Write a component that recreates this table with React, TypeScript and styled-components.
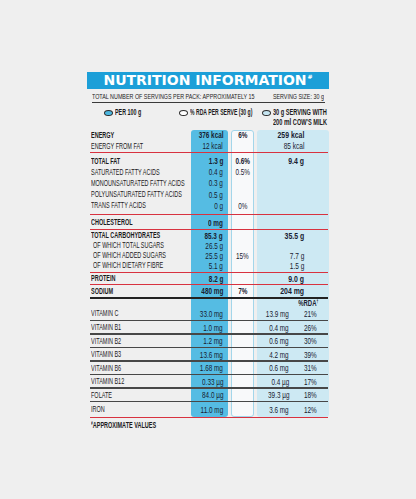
import React from 'react';
import styled, { createGlobalStyle } from 'styled-components';

const Global = createGlobalStyle`
  html, body { margin: 0; padding: 0; background: #efefef; }
  body { font-family: "Liberation Sans", Arial, sans-serif; color: #1c1b1c; }
`;

const Page = styled.div`
  width: 416px;
  height: 499px;
  padding-top: 72px;
  box-sizing: border-box;
  overflow: hidden;
`;

const Panel = styled.div`
  width: 242px;
  margin: 0 auto;
`;

const TitleBar = styled.div`
  height: 17px;
  background: #1c9fd8;
  color: #fff;
  display: flex;
  align-items: center;
  justify-content: center;
  font-family: "DejaVu Sans", sans-serif;
  font-weight: 700;
  font-size: 14px;
  line-height: 17px;
`;

const TitleSup = styled.span`
  font-size: 6px;
  line-height: 6px;
  align-self: flex-start;
  margin-top: 2px;
  margin-left: 1px;
`;

const Cond = styled.span<{ $size?: number; $s?: number; $o?: 'left' | 'right' | 'center'; $bold?: boolean }>`
  display: inline-block;
  white-space: nowrap;
  font-size: ${p => p.$size ?? 8.6}px;
  line-height: 1;
  font-weight: ${p => (p.$bold ? 700 : 400)};
  transform: scaleX(${p => p.$s ?? 0.64});
  transform-origin: ${p => p.$o ?? 'left'} center;
`;

const InfoRow = styled.div`
  margin: 0 4px 0 5px;
  padding-top: 3px;
  height: 10px;
  border-bottom: 1px solid #3a3a3a;
  display: grid;
  grid-template-columns: 1fr 1fr;
  align-items: center;
`;

const InfoLeft = styled.div`
  display: flex;
  justify-content: flex-start;
  min-width: 0;
`;

const InfoRight = styled.div`
  display: flex;
  justify-content: flex-end;
  min-width: 0;
  padding-right: 1px;
`;

const Legend = styled.div`
  height: 26.5px;
  box-sizing: border-box;
  padding: 4.7px 0 0 17px;
  display: grid;
  grid-template-columns: 75px 83px 1fr;
  align-items: start;
`;

const LegendItem = styled.div`
  display: flex;
  align-items: flex-start;
  gap: 2px;
`;

const LegendText = styled.div`
  display: flex;
  flex-direction: column;
  & > span { height: 9px; line-height: 9px; }
`;

const Oval = styled.span<{ $fill: string }>`
  width: 7px;
  height: 4px;
  margin-top: 2.2px;
  border: 1px solid #2b2b2b;
  border-radius: 50%;
  background: ${p => p.$fill};
  flex: none;
`;

const Big = styled.span`
  font-size: 9.6px;
  line-height: 9px;
`;

const Table = styled.div<{ $rows: string }>`
  display: grid;
  grid-template-columns: 101px 37px 23px 72px;
  column-gap: 3px;
  grid-template-rows: ${p => p.$rows};
`;

const Col1Bg = styled.div`
  grid-column: 2;
  grid-row: 1 / -1;
  background: #55bce3;
  border-radius: 3px;
  z-index: 0;
`;

const Col2Bg = styled.div`
  grid-column: 3;
  grid-row: 1 / -1;
  background: #f8f9fa;
  border: 1.5px solid #a3d6ea;
  border-radius: 3px;
  z-index: 0;
`;

const Col3Bg = styled.div`
  grid-column: 4;
  grid-row: 1 / -1;
  background: #cde9f3;
  border-radius: 3px;
  z-index: 0;
`;

const Rule = styled.div<{ $r: number; $at: number; $t: number; $c: string }>`
  grid-row: ${p => p.$r};
  grid-column: 1 / -1;
  align-self: start;
  margin: ${p => p.$at}px 1px 0 3px;
  height: ${p => p.$t}px;
  background: ${p => p.$c};
  z-index: 1;
`;

const CellBase = styled.div<{ $r: number }>`
  grid-row: ${p => p.$r};
  display: flex;
  align-items: center;
  min-width: 0;
  z-index: 2;
  color: #182030;
`;

const LabelCell = styled(CellBase)<{ $indent?: boolean }>`
  grid-column: 1;
  justify-content: flex-start;
  padding-left: ${p => (p.$indent ? 5.5 : 4)}px;
  color: #1c1b1c;
`;

const PerHundredCell = styled(CellBase)`
  grid-column: 2;
  justify-content: flex-end;
  padding-right: 5px;
`;

const RdaCell = styled(CellBase)`
  grid-column: 3;
  justify-content: center;
`;

const ServeCell = styled(CellBase)`
  grid-column: 4;
  justify-content: flex-end;
  padding-right: 25px;
`;

const VitServeCell = styled(CellBase)`
  grid-column: 4;
  display: grid;
  grid-template-columns: 32px 28px;
  justify-items: end;
  align-items: center;
`;

const RdaHead = styled(CellBase)`
  grid-column: 4;
  justify-content: flex-end;
  padding-right: 11px;
`;

const SupMark = styled.sup`
  font-size: 5px;
  vertical-align: top;
  line-height: 1;
`;

const BottomRule = styled.div`
  margin: 0.4px 1px 0 3px;
  height: 1.3px;
  background: #d8323f;
`;

const Footnote = styled.div`
  margin-top: 2.8px;
  padding-left: 4px;
  height: 9px;
  display: flex;
  align-items: center;
`;

type RowE = {
  k: 'row';
  h: number;
  label: string;
  v1?: string;
  v2?: string;
  v3?: string;
  bold?: boolean;
  indent?: boolean;
};
type VitE = { k: 'vit'; h: number; label: string; v1: string; amt: string; pct: string };
type LineE = { k: 'line'; h: number; at: number; t: number; c: string };
type HeadE = { k: 'head'; h: number };
type Entry = RowE | VitE | LineE | HeadE;

const RED = '#d8323f';
const DARK = '#222222';
const GRAY = '#474747';

const row = (h: number, label: string, v1?: string, v2?: string, v3?: string, o: { bold?: boolean; indent?: boolean } = {}): RowE => ({
  k: 'row', h, label, v1, v2, v3, ...o,
});
const vit = (h: number, label: string, v1: string, amt: string, pct: string): VitE => ({ k: 'vit', h, label, v1, amt, pct });
const line = (h: number, at: number, t: number, c: string): LineE => ({ k: 'line', h, at, t, c });
const gl = (): LineE => line(1.5, 0, 1.5, GRAY);

const entries: Entry[] = [
  row(11, 'ENERGY', '376 kcal', '6%', '259 kcal', { bold: true }),
  row(11, 'ENERGY FROM FAT', '12 kcal', '', '85 kcal'),
  line(3.95, 0.15, 1.3, RED),
  row(11.1, 'TOTAL FAT', '1.3 g', '0.6%', '9.4 g', { bold: true }),
  row(11.1, 'SATURATED FATTY ACIDS', '0.4 g', '0.5%'),
  row(11.1, 'MONOUNSATURATED FATTY ACIDS', '0.3 g'),
  row(11.1, 'POLYUNSATURATED FATTY ACIDS', '0.5 g'),
  row(11.1, 'TRANS FATTY ACIDS', '0 g', '0%'),
  line(6.05, 2.9, 1.3, RED),
  row(11, 'CHOLESTEROL', '0 mg', '', '', { bold: true }),
  line(2.7, 0.65, 1.3, RED),
  row(10, 'TOTAL CARBOHYDRATES', '85.3 g', '', '35.5 g', { bold: true }),
  row(10, 'OF WHICH TOTAL SUGARS', '26.5 g', '', '', { indent: true }),
  row(10, 'OF WHICH ADDED SUGARS', '25.5 g', '15%', '7.7 g', { indent: true }),
  row(10, 'OF WHICH DIETARY FIBRE', '5.1 g', '', '1.5 g', { indent: true }),
  line(2.5, 0.95, 1.3, RED),
  row(10.4, 'PROTEIN', '8.2 g', '', '9.0 g', { bold: true }),
  line(2, 0.05, 1.3, RED),
  row(11.2, 'SODIUM', '480 mg', '7%', '204 mg', { bold: true }),
  line(2.3, 0.7, 1.6, DARK),
  { k: 'head', h: 8.4 },
  vit(12.45, 'VITAMIN C', '33.0 mg', '13.9 mg', '21%'),
  gl(),
  vit(12, 'VITAMIN B1', '1.0 mg', '0.4 mg', '26%'),
  gl(),
  vit(12, 'VITAMIN B2', '1.2 mg', '0.6 mg', '30%'),
  gl(),
  vit(12, 'VITAMIN B3', '13.6 mg', '4.2 mg', '39%'),
  gl(),
  vit(12, 'VITAMIN B6', '1.68 mg', '0.6 mg', '31%'),
  gl(),
  vit(12, 'VITAMIN B12', '0.33 µg', '0.4 µg', '17%'),
  gl(),
  vit(12, 'FOLATE', '84.0 µg', '39.3 µg', '18%'),
  gl(),
  vit(14.25, 'IRON', '11.0 mg', '3.6 mg', '12%'),
];

const VAL = 9.4;
const VS = 0.68;

function renderEntry(e: Entry, i: number) {
  const r = i + 1;
  if (e.k === 'line') return <Rule key={i} $r={r} $at={e.at} $t={e.t} $c={e.c} />;
  if (e.k === 'head')
    return (
      <RdaHead key={i} $r={r}>
        <Cond $size={9} $s={0.66} $o="right" $bold>
          %RDA<SupMark>†</SupMark>
        </Cond>
      </RdaHead>
    );
  if (e.k === 'vit')
    return (
      <React.Fragment key={i}>
        <LabelCell $r={r}>
          <Cond>{e.label}</Cond>
        </LabelCell>
        <PerHundredCell $r={r}>
          <Cond $size={VAL} $s={VS} $o="right">{e.v1}</Cond>
        </PerHundredCell>
        <VitServeCell $r={r}>
          <Cond $size={VAL} $s={VS} $o="right">{e.amt}</Cond>
          <Cond $size={VAL} $s={VS} $o="right">{e.pct}</Cond>
        </VitServeCell>
      </React.Fragment>
    );
  return (
    <React.Fragment key={i}>
      <LabelCell $r={r} $indent={e.indent}>
        <Cond $bold={e.bold}>{e.label}</Cond>
      </LabelCell>
      {e.v1 ? (
        <PerHundredCell $r={r}>
          <Cond $size={VAL} $s={VS} $o="right" $bold={e.bold}>{e.v1}</Cond>
        </PerHundredCell>
      ) : null}
      {e.v2 ? (
        <RdaCell $r={r}>
          <Cond $size={VAL} $s={VS} $o="center" $bold={e.bold}>{e.v2}</Cond>
        </RdaCell>
      ) : null}
      {e.v3 ? (
        <ServeCell $r={r}>
          <Cond $size={9.6} $s={e.bold ? 0.72 : VS} $o="right" $bold={e.bold}>{e.v3}</Cond>
        </ServeCell>
      ) : null}
    </React.Fragment>
  );
}

export default function App() {
  const rows = entries.map(e => `${e.h}px`).join(' ');
  return (
    <>
      <Global />
      <Page>
        <Panel>
          <TitleBar>
            NUTRITION INFORMATION<TitleSup>#</TitleSup>
          </TitleBar>
          <InfoRow>
            <InfoLeft>
              <Cond $size={8} $s={0.672}>TOTAL NUMBER OF SERVINGS PER PACK: APPROXIMATELY 15</Cond>
            </InfoLeft>
            <InfoRight>
              <Cond $size={8} $s={0.672} $o="right">SERVING SIZE: 30 g</Cond>
            </InfoRight>
          </InfoRow>
          <Legend>
            <LegendItem>
              <Oval $fill="#4cb7e0" />
              <LegendText>
                <Cond $size={8.5} $s={0.63} $bold>PER 100 g</Cond>
              </LegendText>
            </LegendItem>
            <LegendItem>
              <Oval $fill="#ffffff" />
              <LegendText>
                <Cond $size={8.5} $s={0.6} $bold>% RDA PER SERVE (30 g)</Cond>
              </LegendText>
            </LegendItem>
            <LegendItem>
              <Oval $fill="#c4e4f0" />
              <LegendText>
                <Cond $size={8.5} $s={0.66} $bold>30 g SERVING WITH</Cond>
                <Cond $size={8.5} $s={0.66} $bold>
                  200 <Big>ml</Big> COW'S MILK
                </Cond>
              </LegendText>
            </LegendItem>
          </Legend>
          <Table $rows={rows}>
            <Col1Bg />
            <Col2Bg />
            <Col3Bg />
            {entries.map(renderEntry)}
          </Table>
          <BottomRule />
          <Footnote>
            <Cond $bold>
              <SupMark>#</SupMark>APPROXIMATE VALUES
            </Cond>
          </Footnote>
        </Panel>
      </Page>
    </>
  );
}
